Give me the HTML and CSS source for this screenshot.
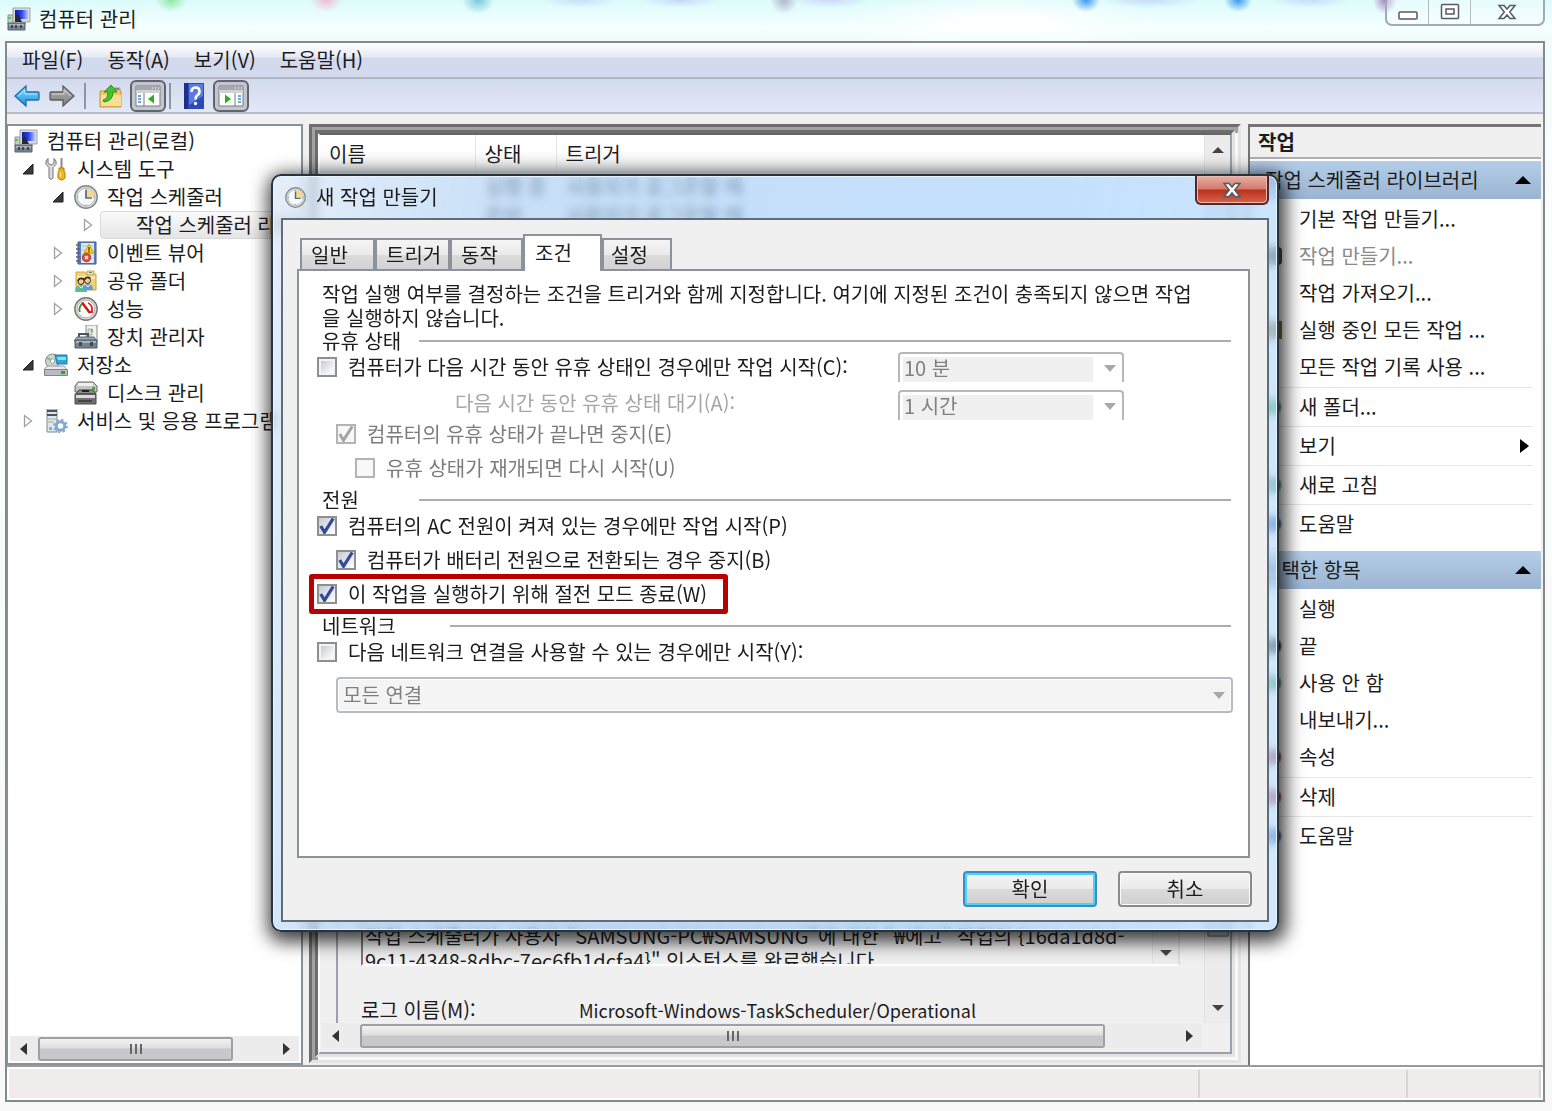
FILE: index.html
```html
<!DOCTYPE html>
<html lang="ko">
<head>
<meta charset="utf-8">
<title>컴퓨터 관리</title>
<link rel="stylesheet" href="styles.css">
</head>
<body>
<svg width="0" height="0" class="defs" aria-hidden="true">
  <defs>
    <linearGradient id="gBlue" x1="0" y1="0" x2="0" y2="1"><stop offset="0" stop-color="#8fd8fb"/><stop offset=".5" stop-color="#4fb9f2"/><stop offset="1" stop-color="#1c8fd6"/></linearGradient>
    <linearGradient id="gGray" x1="0" y1="0" x2="0" y2="1"><stop offset="0" stop-color="#b5b5b5"/><stop offset="1" stop-color="#7d7d7d"/></linearGradient>
    <linearGradient id="gScreen" x1="0" y1="0" x2="1" y2="0"><stop offset="0" stop-color="#0a1fb0"/><stop offset=".5" stop-color="#2a3ff0"/><stop offset="1" stop-color="#b8c8ff"/></linearGradient>
    <symbol id="i-computer" viewBox="0 0 24 24">
      <path d="M1 8h5v9H1z" fill="#c9cdd2" stroke="#8b9098"/><path d="M1 10h3v2H1z" fill="#4fcf3d"/>
      <path d="M6 1h17v14H6z" fill="#d9d9d6" stroke="#a5a59f"/><path d="M8 3h13v9H8z" fill="url(#gScreen)"/>
      <path d="M8 9l3-2 4 8H8z" fill="#222b3a"/><path d="M14 15h5v2h-5z" fill="#aaa"/>
      <path d="M1 16h17v7H1z" fill="#77838c" stroke="#5a666f"/><path d="M2 17h15v2H2z" fill="#a6b1b8"/><path d="M4 18h2v3H4zM8 18h2v3H8zM13 18h2v3h-2z" fill="#3c464e"/>
    </symbol>
    <symbol id="i-clock" viewBox="0 0 24 24">
      <circle cx="12" cy="12" r="11.2" fill="#d5d9dc" stroke="#7f868b" stroke-width="1.4"/><circle cx="12" cy="12" r="8.8" fill="#f7fafc" stroke="#a4abb0" stroke-width=".8"/>
      <path d="M12 12V3.4A8.6 8.6 0 0 1 20.600 12z" fill="#fad58c"/><path d="M12 5v8h6" fill="none" stroke="#4d6d86" stroke-width="1.700"/>
      <path d="M12 3.500v1M12 19.500v1M3.500 12h1M19.500 12h1" stroke="#888"/>
    </symbol>
    <symbol id="i-tools" viewBox="0 0 24 24">
      <path d="M4 1.500v5l3 1.500 3-1.500v-5q3 2 2 6L9 10.500V21q-2 3-4 0V10.500L2 7.500Q1 3.500 4 1.500z" fill="#dcdcdc" stroke="#777"/>
      <path d="M17.500 1v10" stroke="#8a8a8a" stroke-width="2"/><path d="M15 11h5v3l1 2v5q-3.500 4-7 0v-5l1-2z" fill="#f5b417" stroke="#b97b05"/><path d="M16.500 15v5" stroke="#ffe08a" stroke-width="1.500"/>
    </symbol>
    <symbol id="i-event" viewBox="0 0 24 24">
      <path d="M4 1h18v22H4z" fill="#5d7fb8" stroke="#3d5c92"/><path d="M7 2h13v20H7z" fill="#dbe7f6"/><path d="M2 4h4M2 8h4M2 12h4M2 16h4M2 20h4" stroke="#5a6272" stroke-width="1.500"/>
      <path d="M8 5h11M8 9h11M8 13h11M8 17h11" stroke="#a9bedb"/>
      <path d="M15 3l5 9H10z" fill="#f8d21b" stroke="#c09806" stroke-width=".8"/><path d="M15 6v3.500M15 10v1.200" stroke="#333" stroke-width="1.300"/>
      <circle cx="12.500" cy="16.500" r="4.300" fill="#e2463c" stroke="#b0261e" stroke-width=".7"/><path d="M11 15l3 3m0-3l-3 3" stroke="#fff" stroke-width="1.300"/>
    </symbol>
    <symbol id="i-share" viewBox="0 0 24 24">
      <path d="M2 3h9l1 2h10v16H2z" fill="#f2d277" stroke="#cda444"/><path d="M13 2h7v4h-7z" fill="#f6dd92" stroke="#cda444"/><path d="M15 3h3v1h-3z" fill="#3e8bd0"/><path d="M3 7h18v3H3z" fill="#fbe9ae"/>
      <circle cx="7" cy="12.500" r="3" fill="#f5c89e" stroke="#3b2a16"/><path d="M4 12q1-4 6-2" stroke="#3b2a16" stroke-width="1.600" fill="none"/>
      <circle cx="13.500" cy="11.500" r="3" fill="#f5c89e" stroke="#3b2a16"/><path d="M10.500 11q1-4 6-2" stroke="#3b2a16" stroke-width="1.600" fill="none"/>
      <path d="M1 23q0-7 6-7t6 7z" fill="#59bd95"/><path d="M9 21q0-6 5-6t5 6z" fill="#5c9be0"/><path d="M5 17l2 2 2-2M12 16l2 2 2-2" stroke="#fff" fill="none"/>
    </symbol>
    <symbol id="i-perf" viewBox="0 0 24 24">
      <circle cx="12" cy="12" r="11.200" fill="#d6d6d6" stroke="#777" stroke-width="1.400"/><circle cx="12" cy="12" r="8.800" fill="#fff" stroke="#aaa" stroke-width=".8"/>
      <path d="M6 15a6.500 6.500 0 0 1 3-8.500" fill="none" stroke="#3c8a3c" stroke-width="1.800"/><path d="M14 6a6.500 6.500 0 0 1 4 6v3h-2" fill="none" stroke="#d22" stroke-width="1.800"/><path d="M8 5.500l8 10.500" stroke="#d11a1a" stroke-width="2.600"/>
    </symbol>
    <symbol id="i-device" viewBox="0 0 24 24">
      <path d="M12 0h11v17H12z" fill="#f2f2f2" stroke="#8b8b8b"/><path d="M14 4h4v6h-4z" fill="#ddd" stroke="#aaa"/><path d="M17 4h2v3h-2z" fill="#55d62e"/>
      <path d="M5 13V9h9v4" fill="none" stroke="#4a5660" stroke-width="2"/><path d="M3 12h17l3 4H0z" fill="#9aa8b3" stroke="#5d6a74"/><path d="M1 15h22v8H1z" fill="#73828e" stroke="#4f5c66"/><path d="M2 16h20v2H2z" fill="#a9b5be"/><path d="M5 17h3v4H5zM16 17h3v4h-3z" fill="#3f4a52"/>
    </symbol>
    <symbol id="i-storage" viewBox="0 0 24 24">
      <circle cx="8.500" cy="8" r="7" fill="#cfd3d6" stroke="#858a8e"/><circle cx="8.500" cy="8" r="2.300" fill="#fff" stroke="#999"/><path d="M3 5l4 2" stroke="#7cc774" stroke-width="2"/>
      <path d="M11 2h12v9H13z" fill="#2fa5d5" stroke="#1b7da8"/><path d="M13 4h9v3h-8z" fill="#8fdcf8"/>
      <path d="M3 13h17l3 4H0z" fill="#e9e9ee" stroke="#9a9aa2"/><path d="M0.500 16.500h23v6h-23z" fill="#b9bac3" stroke="#84858d"/><path d="M17 18h4v3h-4z" fill="#36a522"/>
    </symbol>
    <symbol id="i-disk" viewBox="0 0 24 24">
      <path d="M4 1h15l4 4v6H1V5z" fill="#c4c4c4" stroke="#6a6a6a"/><path d="M4 2h15v3H4z" fill="#efefef"/><path d="M5 9h14l3 4H2z" fill="#8b8b8b" stroke="#3f3f3f"/><path d="M8 9h7v2H8z" fill="#222"/><path d="M18 6h3v3h-3z" fill="#36b522"/>
      <path d="M1 13h21v10H1z" fill="#6f6f6f" stroke="#4a4a4a"/><path d="M2 14h19v3H2z" fill="#dcdcdc"/><path d="M4 19h14v2H4z" fill="#444"/>
    </symbol>
    <symbol id="i-service" viewBox="0 0 24 24">
      <path d="M3 0h10v23H3z" fill="#e1e6ea" stroke="#7f8a92"/><path d="M3 1h10v2H3zM3 5h10v2H3z" fill="#47555f"/><path d="M4 10h8M4 13h6" stroke="#9aa" /><path d="M5 18h3v3H5z" fill="#59c3d8"/>
      <g fill="none" stroke="#7fa9cc"><circle cx="16.500" cy="17" r="4.300" stroke-width="3"/><circle cx="16.500" cy="17" r="6.300" stroke-width="2" stroke-dasharray="2.200 2.750"/></g>
    </symbol>
    <symbol id="i-back" viewBox="0 0 26 22"><path d="M1 11L12 1v6h12q1 0 1 1v6q0 1-1 1H12v6z" fill="url(#gBlue)" stroke="#1f6fa8" stroke-width="1.300"/><path d="M4 11l7-6v4h12" fill="none" stroke="#b8e8ff"/></symbol>
    <symbol id="i-forward" viewBox="0 0 26 22"><path d="M25 11L14 1v6H2Q1 7 1 8v6q0 1 1 1h12v6z" fill="url(#gGray)" stroke="#5d5d5d" stroke-width="1.300"/><path d="M3 9h12V5l7 6" fill="none" stroke="#d6d6d6"/></symbol>
    <symbol id="i-up" viewBox="0 0 24 24"><path d="M1 7h9l2-3h9v3h1v16H1z" fill="#efc667" stroke="#c6983a"/><path d="M2 11h20v11H2z" fill="#f8df98"/><path d="M16 4h4v2h-4z" fill="#4a90d0"/><path d="M4 16q5-1 5-8H5l7-7 6 7h-4q0 9-9 10z" fill="#42c52c" stroke="#1f8a14" stroke-width=".9"/></symbol>
    <symbol id="i-paneleft" viewBox="0 0 26 22"><path d="M1 1h24v20H1z" fill="#fdfdfd" stroke="#777b82"/><path d="M1 1h24v4H1z" fill="#a4a8b0"/><path d="M17 3h1M20 3h1M23 3h1" stroke="#fff"/><path d="M1 5h24v3H1z" fill="#d0d2d6"/><path d="M9 8v13" stroke="#777b82"/><path d="M3 11h3M3 14h3M3 17h3" stroke="#3f8bd0" stroke-width="1.500"/><path d="M19 9.500v9L13 14z" fill="#2fae1e"/></symbol>
    <symbol id="i-paneright" viewBox="0 0 26 22"><path d="M1 1h24v20H1z" fill="#fdfdfd" stroke="#777b82"/><path d="M1 1h24v4H1z" fill="#a4a8b0"/><path d="M17 3h1M20 3h1M23 3h1" stroke="#fff"/><path d="M1 5h24v3H1z" fill="#d0d2d6"/><path d="M17 8v13" stroke="#777b82"/><path d="M20 11h3M20 14h3M20 17h3" stroke="#3f8bd0" stroke-width="1.500"/><path d="M7 9.500v9L13 14z" fill="#2fae1e"/></symbol>
    <symbol id="i-help" viewBox="0 0 20 26"><path d="M0 0h20v26H0z" fill="#2c49b8"/><path d="M0 0h4v26H0z" fill="#1c2f8c"/><path d="M5 1h14v12L5 22z" fill="#5b7be0"/><path d="M7.500 9q0-4.500 4-4.500t4 4q0 2.500-2.500 4-1.500 1-1.500 4" fill="none" stroke="#fff" stroke-width="2.600"/><circle cx="11.500" cy="20.500" r="1.700" fill="#fff"/></symbol>
    <symbol id="i-open" viewBox="0 0 12 12"><path d="M11 1v10H1z" fill="#3b3b3b" stroke="#1f1f1f"/></symbol>
    <symbol id="i-closed" viewBox="0 0 12 14"><path d="M2.500 1.500v11L9.500 7z" fill="#fff" stroke="#a0a0a0" stroke-width="1.300"/></symbol>
    <symbol id="i-x" viewBox="0 0 20 16"><path d="M2 1.500h5L10 5l3-3.500h5L12.700 8l5.300 6.500h-5L10 11l-3 3.500H2L7.300 8z" fill="#fff" stroke="#555a66" stroke-width="1.500"/></symbol>
  </defs>
</svg>

<header class="titlebar">
  <svg class="icon"><use href="#i-computer"/></svg>
  <h1>컴퓨터 관리</h1>
  <div class="caption">
    <button type="button" aria-label="최소화"><svg width="20" height="18"><rect x="1" y="9" width="18" height="7" rx="1" fill="#fff" stroke="#555a66" stroke-width="1.500"/></svg></button>
    <button type="button" aria-label="최대화"><svg width="20" height="18"><rect x="1.500" y="1.500" width="17" height="14" rx="1" fill="#fff" stroke="#555a66" stroke-width="1.500"/><rect x="6" y="6" width="8" height="5" fill="#fff" stroke="#555a66" stroke-width="1.500"/></svg></button>
    <button type="button" class="wide" aria-label="닫기"><svg width="20" height="16"><use href="#i-x"/></svg></button>
  </div>
</header>

<div class="window">
  <nav class="menu">
    <button type="button">파일(F)</button><button type="button">동작(A)</button><button type="button">보기(V)</button><button type="button">도움말(H)</button>
  </nav>
  <div class="toolbar">
    <button type="button" aria-label="뒤로"><svg width="26" height="22"><use href="#i-back"/></svg></button>
    <button type="button" aria-label="앞으로"><svg width="26" height="22"><use href="#i-forward"/></svg></button>
    <i class="sep"></i>
    <button type="button" class="up" aria-label="위로"><svg width="24" height="24"><use href="#i-up"/></svg></button>
    <button type="button" class="on" aria-label="콘솔 트리"><svg width="26" height="22"><use href="#i-paneleft"/></svg></button>
    <i class="sep"></i>
    <button type="button" class="help" aria-label="도움말"><svg width="20" height="26"><use href="#i-help"/></svg></button>
    <button type="button" class="on" aria-label="작업 창"><svg width="26" height="22"><use href="#i-paneright"/></svg></button>
  </div>

  <main class="panes">
    <section class="tree">
      <ul>
        <li class="root"><svg class="icon"><use href="#i-computer"/></svg><span>컴퓨터 관리(로컬)</span></li>
        <li class="l1"><svg class="tw"><use href="#i-open"/></svg><svg class="icon"><use href="#i-tools"/></svg><span>시스템 도구</span></li>
        <li class="l2"><svg class="tw"><use href="#i-open"/></svg><svg class="icon"><use href="#i-clock"/></svg><span>작업 스케줄러</span></li>
        <li class="l3"><svg class="tw big"><use href="#i-closed"/></svg><span class="selected">작업 스케줄러 라이브러리</span></li>
        <li class="l2"><svg class="tw big"><use href="#i-closed"/></svg><svg class="icon"><use href="#i-event"/></svg><span>이벤트 뷰어</span></li>
        <li class="l2"><svg class="tw big"><use href="#i-closed"/></svg><svg class="icon"><use href="#i-share"/></svg><span>공유 폴더</span></li>
        <li class="l2"><svg class="tw big"><use href="#i-closed"/></svg><svg class="icon"><use href="#i-perf"/></svg><span>성능</span></li>
        <li class="l2"><i class="tw"></i><svg class="icon"><use href="#i-device"/></svg><span>장치 관리자</span></li>
        <li class="l1"><svg class="tw"><use href="#i-open"/></svg><svg class="icon"><use href="#i-storage"/></svg><span>저장소</span></li>
        <li class="l2"><i class="tw"></i><svg class="icon"><use href="#i-disk"/></svg><span>디스크 관리</span></li>
        <li class="l1"><svg class="tw big"><use href="#i-closed"/></svg><svg class="icon"><use href="#i-service"/></svg><span>서비스 및 응용 프로그램</span></li>
      </ul>
      <div class="hbar"><i class="arrow left"></i><div class="track"><i class="thumb tree-thumb"></i></div><i class="arrow right"></i></div>
    </section>

    <section class="center">
      <div class="sheet">
        <div class="list">
          <table>
            <thead><tr><th class="c-name">이름</th><th class="c-state">상태</th><th>트리거</th></tr></thead>
            <tbody>
              <tr><td></td><td>실행 중</td><td>사용자가 로그온할 때</td></tr>
              <tr><td></td><td>준비</td><td>사용자가 로그온할 때</td></tr>
            </tbody>
          </table>
          <div class="vbar"><i class="arrow top"></i></div>
        </div>
        <div class="detail">
          <div class="fields">
            <div class="message">
              <p>작업 스케줄러가 사용자 "SAMSUNG-PC₩SAMSUNG"에 대한 "₩에고" 작업의 {16da1d8d-9c11-4348-8dbc-7ec6fb1dcfa4}" 인스턴스를 완료했습니다.</p>
              <div class="vbar low"><i class="arrow down"></i></div>
            </div>
            <dl><dt>로그 이름(M):</dt><dd>Microsoft-Windows-TaskScheduler/Operational</dd></dl>
          </div>
          <div class="vbar outer"><i class="grip"></i><i class="arrow down"></i></div>
        </div>
        <div class="hbar main-bar"><i class="arrow left"></i><div class="track"><i class="thumb main-thumb"></i></div><i class="arrow right"></i></div>
      </div>
    </section>

    <aside class="actions">
      <h2>작업</h2>
      <h3>작업 스케줄러 라이브러리<i class="tri"></i></h3>
      <ul class="group">
        <li><button type="button"><i class="dot"></i>기본 작업 만들기...</button></li>
        <li><button type="button" disabled><i class="dot dark"></i>작업 만들기...</button></li>
        <li><button type="button"><i class="dot"></i>작업 가져오기...</button></li>
        <li><button type="button"><i class="dot gold"></i>실행 중인 모든 작업 ...</button></li>
        <li><button type="button"><i class="dot"></i>모든 작업 기록 사용 ...</button></li>
      </ul>
      <ul class="single">
        <li><button type="button"><i class="dot green"></i>새 폴더...</button></li>
        <li><button type="button"><i class="dot"></i>보기<i class="more"></i></button></li>
        <li><button type="button"><i class="dot green"></i>새로 고침</button></li>
        <li><button type="button"><i class="dot blue"></i>도움말</button></li>
      </ul>
      <h3 class="second">선택한 항목<i class="tri"></i></h3>
      <ul class="group">
        <li><button type="button"><i class="dot"></i>실행</button></li>
        <li><button type="button"><i class="dot black"></i>끝</button></li>
        <li><button type="button"><i class="dot green"></i>사용 안 함</button></li>
        <li><button type="button"><i class="dot"></i>내보내기...</button></li>
        <li><button type="button"><i class="dot red"></i>속성</button></li>
      </ul>
      <ul class="single">
        <li><button type="button"><i class="dot red"></i>삭제</button></li>
        <li><button type="button"><i class="dot blue"></i>도움말</button></li>
      </ul>
    </aside>
  </main>
  <footer class="status"><span></span><span></span><span></span></footer>
</div>

<div class="dialog" role="dialog" aria-labelledby="dlg-title">
  <div class="dialog-title">
    <svg><use href="#i-clock"/></svg>
    <h2 id="dlg-title">새 작업 만들기</h2>
    <button type="button" class="close" aria-label="닫기"><svg width="20" height="16"><use href="#i-x"/></svg></button>
  </div>
  <form class="dialog-body">
    <div class="tabs" role="tablist">
      <button type="button" role="tab" class="t1">일반</button><button type="button" role="tab" class="t1">트리거</button><button type="button" role="tab" class="t2">동작</button><button type="button" role="tab" class="active" aria-selected="true">조건</button><button type="button" role="tab" class="t3">설정</button>
    </div>
    <div class="panel">
      <p class="desc">작업 실행 여부를 결정하는 조건을 트리거와 함께 지정합니다. 여기에 지정된 조건이 충족되지 않으면 작업을 실행하지 않습니다.</p>
      <div class="heading first"><h3>유휴 상태</h3></div>
      <div class="pair">
        <label class="check"><input type="checkbox"><span>컴퓨터가 다음 시간 동안 유휴 상태인 경우에만 작업 시작(C):</span></label>
        <select class="combo" disabled aria-label="유휴 시간"><option>10 분</option></select>
      </div>
      <div class="pair wait">
        <label for="wait">다음 시간 동안 유휴 상태 대기(A):</label>
        <select class="combo" id="wait" disabled><option>1 시간</option></select>
      </div>
      <label class="check in1"><input type="checkbox" checked disabled><span>컴퓨터의 유휴 상태가 끝나면 중지(E)</span></label>
      <label class="check in2"><input type="checkbox" disabled><span>유휴 상태가 재개되면 다시 시작(U)</span></label>
      <div class="heading"><h3>전원</h3></div>
      <label class="check"><input type="checkbox" checked><span>컴퓨터의 AC 전원이 켜져 있는 경우에만 작업 시작(P)</span></label>
      <label class="check in1"><input type="checkbox" checked><span>컴퓨터가 배터리 전원으로 전환되는 경우 중지(B)</span></label>
      <label class="check marked"><input type="checkbox" checked><span>이 작업을 실행하기 위해 절전 모드 종료(W)</span></label>
      <div class="heading long"><h3>네트워크</h3></div>
      <label class="check"><input type="checkbox"><span>다음 네트워크 연결을 사용할 수 있는 경우에만 시작(Y):</span></label>
      <select class="network" disabled aria-label="네트워크 연결"><option>모든 연결</option></select>
    </div>
    <div class="buttons">
      <button type="submit" class="ok">확인</button>
      <button type="button">취소</button>
    </div>
  </form>
</div>
</body>
</html>
```
FILE: styles.css
```css
* { box-sizing: border-box; }

body {
  margin: 0;
  position: relative;
  min-height: 100vh;
  display: flex;
  flex-direction: column;
  padding: 0 7px 9px 5px;
  overflow: hidden;
  font: 20px/28px "Noto Sans CJK KR", sans-serif;
  color: #1c1c1c;
  background:
    radial-gradient(ellipse 16px 12px at 171px 0, #8ee8a0, transparent),
    radial-gradient(ellipse 16px 12px at 326px 0, #f0bcd4, transparent),
    radial-gradient(ellipse 16px 14px at 478px 0, #7cc8dc, transparent),
    radial-gradient(ellipse 14px 14px at 784px 0, #b0b4c8, transparent),
    radial-gradient(ellipse 40px 8px at 680px 0, #c8d8f8, transparent),
    radial-gradient(ellipse 40px 8px at 580px 0, #c8e0f8, transparent),
    radial-gradient(ellipse 40px 8px at 830px 0, #ccd8f8, transparent),
    radial-gradient(ellipse 50px 8px at 1150px 0, #c8dcf8, transparent),
    radial-gradient(ellipse 40px 8px at 1310px 0, #c8dcf8, transparent),
    radial-gradient(ellipse 14px 12px at 1086px 0, #3c98f0, transparent),
    radial-gradient(ellipse 14px 12px at 1238px 0, #3c98f0, transparent),
    radial-gradient(ellipse 12px 14px at 1385px 0, #a888c0, transparent),
    radial-gradient(ellipse 160px 30px at 1000px 20px, #fff, transparent),
    linear-gradient(180deg, #dcfbfc 0, #f6ffff 28px, #f2fcfc 41px, #fbfdfd 200px, #f8f8f8 100%);
}

.defs { position: absolute; }
h1, h2, h3, p, ul, dl, dd { margin: 0; padding: 0; font-size: 20px; font-weight: 400; }
ul { list-style: none; }
svg { flex: none; }
button { font: inherit; color: inherit; border: 0; padding: 0; background: none; }
.icon { width: 24px; height: 24px; }

.titlebar { display: flex; align-items: center; height: 41px; padding: 0 0 4px 2px; }
.titlebar h1 { margin-left: 8px; flex: 1; }
.caption { display: flex; align-self: flex-start; height: 26px; border: 1px solid #a3abb2; border-width: 0 2px 2px; border-radius: 0 0 7px 7px; background: rgba(255, 255, 255, .3); }
.caption button { width: 42px; display: flex; align-items: center; justify-content: center; border-right: 1px solid #b4bcc2; }
.caption .wide { width: 72px; border: 0; }

.window { flex: 1; display: flex; flex-direction: column; border: 2px solid #84898c; background: #f0f0f0; }
.menu { display: flex; height: 36px; padding-left: 15px; gap: 24px; border-bottom: 2px solid #b4b8c4; background: linear-gradient(#fff 0, #e5eaf5 14px, #d4daed 15px, #d4daed 100%); }
.toolbar { display: flex; align-items: center; height: 35px; padding: 1px 0 0 7px; border-bottom: 2px solid #b6bccc; background: linear-gradient(#d3daed, #e2e8f6); }
.toolbar button { display: flex; align-items: center; justify-content: center; margin-right: 9px; }
.toolbar .sep { width: 2px; height: 26px; background: #8f94a0; margin-right: 13px; }
.toolbar .up { margin-right: 7px; }
.toolbar .on { width: 36px; height: 32px; margin-right: 3px; border: 2px solid #5f6570; border-radius: 6px; background: #c3c6cf; }

.panes { flex: 1; display: flex; padding-top: 10px; }
.tree { width: 296px; flex: none; display: flex; flex-direction: column; overflow: hidden; padding-top: 1px; border: 2px solid #8a909c; border-left-width: 1px; background: #fff; }
.tree ul { flex: 1; }
.tree li { display: flex; align-items: center; height: 28px; white-space: nowrap; }
.tree .icon { margin-right: 9px; }
.tree .tw { width: 12px; height: 12px; margin-right: 10px; }
.tree .big { height: 14px; }
.root { padding-left: 6px; }
.l1 { padding-left: 14px; }
.l2 { padding-left: 44px; }
.l3 { padding-left: 74px; }
.l3 .tw { margin-right: 6px; }
.selected { flex: 1; height: 28px; line-height: 26px; padding-left: 35px; border: 1px solid #d9d9d9; border-radius: 4px; background: linear-gradient(#fafafa, #e5e5e5); }

.hbar { display: flex; align-items: center; height: 25px; margin: 0 2px 2px; background: #ececec; }
.hbar .track { flex: 1; display: flex; height: 24px; }
.main-bar { margin: 0 28px 4px 2px; }
.arrow { width: 26px; height: 20px; display: flex; align-items: center; justify-content: center; }
.arrow::before { content: ""; border: 6px solid transparent; }
.arrow.left::before { border-right: 7px solid #333; border-left: 0; }
.arrow.right::before { border-left: 7px solid #333; border-right: 0; }
.arrow.down::before { border-top-color: #444; border-bottom: 0; }
.arrow.top::before { border-bottom-color: #444; border-top: 0; }
.thumb { height: 24px; border: 2px solid #a0a0a4; border-radius: 3px; background: linear-gradient(90deg, #666 2px, transparent 2px 5px, #666 5px 7px, transparent 7px 10px, #666 10px) center / 12px 10px no-repeat, linear-gradient(#f2f2f2 0, #dededf 45%, #c8c8cb 50%, #c8c8cb 100%); }
.tree-thumb { width: 195px; margin-left: 2px; }
.main-thumb { width: 90%; margin-left: 12px; }

.center {
  flex: 1;
  min-width: 0;
  display: flex;
  margin: 0 7px 2px 6px;
  border: 9px double;
  border-color: #6d6d6d #e4e4e4 #e4e4e4 #6d6d6d;
  background:
    linear-gradient(90deg, #a2a2a2 9px, transparent 9px) border-box,
    linear-gradient(#a2a2a2 9px, #f8f8f8 9px) border-box;
}
.sheet { flex: 1; min-width: 0; display: flex; flex-direction: column; background: #f0f0f0; border: 2px solid #9aa0ac; border-left-color: #fff; border-top-color: #666; }
.list { flex: 1; display: flex; background: #fff; }
table { width: 100%; align-self: flex-start; table-layout: fixed; border-collapse: collapse; }
th { height: 38px; padding: 0 0 0 9px; text-align: left; font-weight: 400; border-right: 1px solid #e2e3e6; background: linear-gradient(#fff 40%, #e9eaec); }
th:last-child { border: 0; }
.c-name { width: 155px; }
.c-state { width: 81px; }
td { height: 28px; padding: 0 0 0 10px; white-space: nowrap; }
.vbar { width: 26px; flex: none; display: flex; flex-direction: column; align-items: center; background: #ececec; border-left: 1px solid #e0e0e0; }
.vbar .arrow { width: 24px; height: 30px; }
.detail { display: flex; height: 130px; padding-left: 16px; }
.fields { flex: 1; min-width: 0; border-left: 2px solid #9aa0ac; padding: 0 24px 0 23px; }
.message { display: flex; height: 73px; overflow: hidden; border: 2px solid #dcdcdc; border-left-color: #777; border-bottom-color: #fff; }
.message p { flex: 1; line-height: 25px; padding: 28px 0 0 2px; }
.low { justify-content: flex-end; }
.low .arrow { height: 22px; }
dl { display: flex; margin-top: 30px; }
dt { width: 218px; }
dd { font-size: 18px; }
.outer { justify-content: space-between; }
.outer .grip { width: 22px; height: 44px; border: 2px solid #a0a0a4; border-radius: 3px; background: #d4d4d6; }

.actions { width: 293px; flex: none; margin-right: 2px; border-left: 2px solid #747474; border-top: 3px solid #747474; background: #fff; }
.actions h2 { height: 32px; padding-left: 8px; line-height: 30px; font-weight: 700; border-bottom: 2px solid #b0b0b0; background: #f0f0f0; }
.actions h3 { display: flex; align-items: center; justify-content: space-between; height: 38px; padding: 0 10px 0 15px; margin: 2px 0 1px; background: linear-gradient(#b4cde8, #9ab4d2); }
.actions .second { margin-top: 8px; padding-left: 13px; }
.tri { border: 8px solid transparent; border-top: 0; border-bottom-color: #000; }
.actions ul { padding-right: 8px; }
.actions button { display: flex; align-items: center; width: 100%; text-align: left; height: 38px; padding-left: 12px; }
.actions .group button { height: 37px; }
.actions .group { padding-bottom: 2px; }
.actions button:disabled { color: #8a8a8a; }
.single li { border-top: 1px solid #e6e6e6; }
.more { margin: 0 4px 0 auto; border: 7px solid transparent; border-left: 9px solid #000; border-right: 0; }
.dot { width: 20px; height: 18px; margin-right: 17px; }
.dark { border-radius: 4px; background: #4a4a4a; }
.black { background: radial-gradient(#111 50%, transparent 75%); }
.gold { background: #8a7030; }
.green { background: radial-gradient(#2c9a50 50%, transparent 75%); }
.blue { background: radial-gradient(#2a4cb0 50%, transparent 75%); }
.red { background: radial-gradient(#a82634 50%, transparent 75%); }

.status { display: flex; height: 35px; border-top: 2px solid #9a9a9a; padding: 3px 2px 2px; background: #f0ecec; box-shadow: inset 0 0 0 2px #fff; }
.status span { flex: 1; border-right: 2px solid #d8d5d5; }
.status span:nth-child(2) { flex: 0 0 208px; }
.status span:last-child { flex: 0 0 133px; }

.dialog {
  position: absolute;
  left: 271px;
  right: 273px;
  top: 174px;
  padding: 0 8px 8px;
  border: 2px solid #263442;
  border-radius: 10px;
  background: linear-gradient(100deg, rgba(222, 234, 247, .8) 0, rgba(170, 206, 244, .66) 22%, rgba(164, 208, 252, .66) 70%, rgba(190, 222, 255, .7) 100%);
  backdrop-filter: blur(4px);
  box-shadow: inset 0 0 0 1px #e8f4ff, 2px 5px 18px 5px rgba(0, 0, 0, .75);
}
.dialog-title { display: flex; align-items: center; height: 42px; padding-left: 4px; }
.dialog-title svg { width: 21px; height: 21px; }
.dialog-title h2 { flex: 1; margin-left: 10px; }
.close { align-self: flex-start; display: flex; align-items: center; justify-content: center; width: 74px; height: 29px; border: 2px solid #53262a; border-top: 0; border-radius: 0 0 6px 6px; background: linear-gradient(#e6b0a6 0, #d5796b 48%, #b9301c 52%, #d8634a 100%); box-shadow: inset 0 0 0 1px #eebbb0; }
.dialog .close svg { width: 20px; height: 16px; }
.dialog-body { display: flex; flex-direction: column; padding: 14px 17px 13px 14px; border: 2px solid #5f6d7a; background: #f0f0f0; }

.tabs { display: flex; align-items: flex-end; height: 36px; padding-left: 3px; margin-bottom: -1px; }
.tabs button { height: 32px; padding: 0 0 0 9px; text-align: left; line-height: 28px; border: 2px solid #8c919b; border-bottom: 0; background: linear-gradient(#f4f4f4 0, #ebebeb 48%, #dadada 52%, #d2d2d2 100%); }
.tabs .t1 { width: 75px; }
.tabs .t2 { width: 73px; }
.tabs .t3 { width: 70px; padding-left: 7px; }
.tabs .active { position: relative; width: 79px; height: 37px; margin-bottom: -1px; padding: 0 0 2px 10px; background: #fff; }

.panel { min-height: 589px; padding: 11px 17px 0 18px; border: 2px solid #8c919b; background: #fff; }
.desc { padding: 0 24px 0 5px; line-height: 24px; word-break: break-all; }
.heading { display: flex; align-items: center; height: 18px; margin-top: 6px; padding-left: 5px; }
.heading.first { margin-top: 2px; }
.heading h3 { width: 97px; line-height: 18px; }
.heading.long h3 { width: 128px; }
.heading::after { content: ""; flex: 1; height: 2px; background: #adadad; }
.pair { display: flex; justify-content: space-between; padding-right: 107px; }
.check { position: relative; display: flex; align-items: center; width: fit-content; height: 34px; }
.in1 { margin-left: 19px; }
.in2 { margin-left: 38px; }
.check span { white-space: nowrap; }
.check input { appearance: none; flex: none; width: 20px; height: 20px; margin: 0 11px 0 0; border: 2px solid #8e8f8f; background: linear-gradient(135deg, #c6ccd4, #fff) content-box, #f4f4f4; padding: 2px; }
.check input:checked { background: url("data:image/svg+xml,%3Csvg xmlns='http://www.w3.org/2000/svg' viewBox='0 0 16 16'%3E%3Cpath d='M3 8l3 5L13 2' fill='none' stroke='%23334a9a' stroke-width='2.6'/%3E%3C/svg%3E") border-box, linear-gradient(135deg, #c6ccd4, #fff); }
.check input:disabled { border-color: #b4b4b4; background: #f8f8f8; }
.check input:disabled:checked { background: url("data:image/svg+xml,%3Csvg xmlns='http://www.w3.org/2000/svg' viewBox='0 0 16 16'%3E%3Cpath d='M3 8l3 5L13 2' fill='none' stroke='%23a4a4a4' stroke-width='2.4'/%3E%3C/svg%3E") border-box, #f8f8f8; }
.check input:disabled + span { color: #7c7c7c; }
.marked::before { content: ""; position: absolute; inset: -3px -21px -3px -8px; border: 5px solid #b80000; border-radius: 3px; }
.combo { appearance: none; opacity: 1; width: 226px; height: 30px; margin-top: 2px; padding: 0 4px; font: inherit; color: #808080; border: 2px solid #b8b8b8; border-bottom: 0; border-radius: 4px 4px 0 0; background: url("data:image/svg+xml,%3Csvg xmlns='http://www.w3.org/2000/svg' width='12' height='7'%3E%3Cpath d='M0 0h12L6 7z' fill='%23a8a8a8'/%3E%3C/svg%3E") right 6px center no-repeat, linear-gradient(#f0f0f0, #f0f0f0) 3px 3px / 190px 28px no-repeat, #fff; }
.wait { height: 33px; padding-top: 4px; color: #a6a6a6; }
.wait label { margin-left: 138px; line-height: 30px; }
.network { appearance: none; opacity: 1; display: block; width: calc(100% - 17px); height: 36px; margin: 8px 0 0 19px; padding: 0 5px; font: inherit; color: #808080; border: 2px solid #b8bcc0; border-radius: 4px; background: url("data:image/svg+xml,%3Csvg xmlns='http://www.w3.org/2000/svg' width='12' height='7'%3E%3Cpath d='M0 0h12L6 7z' fill='%23a8a8a8'/%3E%3C/svg%3E") right 6px center no-repeat, #f4f4f4; box-shadow: inset 0 0 0 1px #fff; }

.buttons { display: flex; justify-content: flex-end; gap: 21px; margin: 13px -2px 0 0; }
.buttons button { width: 134px; height: 36px; line-height: 30px; border: 2px solid #8a8a8a; border-radius: 4px; background: linear-gradient(#f4f4f4 0, #ebebeb 48%, #dadada 52%, #d0d0d0 100%); box-shadow: inset 0 0 0 1px #fbfbfb; }
.buttons .ok { border-color: #3a8fc0; box-shadow: inset 0 0 0 2px #4fd0f5; }
```
